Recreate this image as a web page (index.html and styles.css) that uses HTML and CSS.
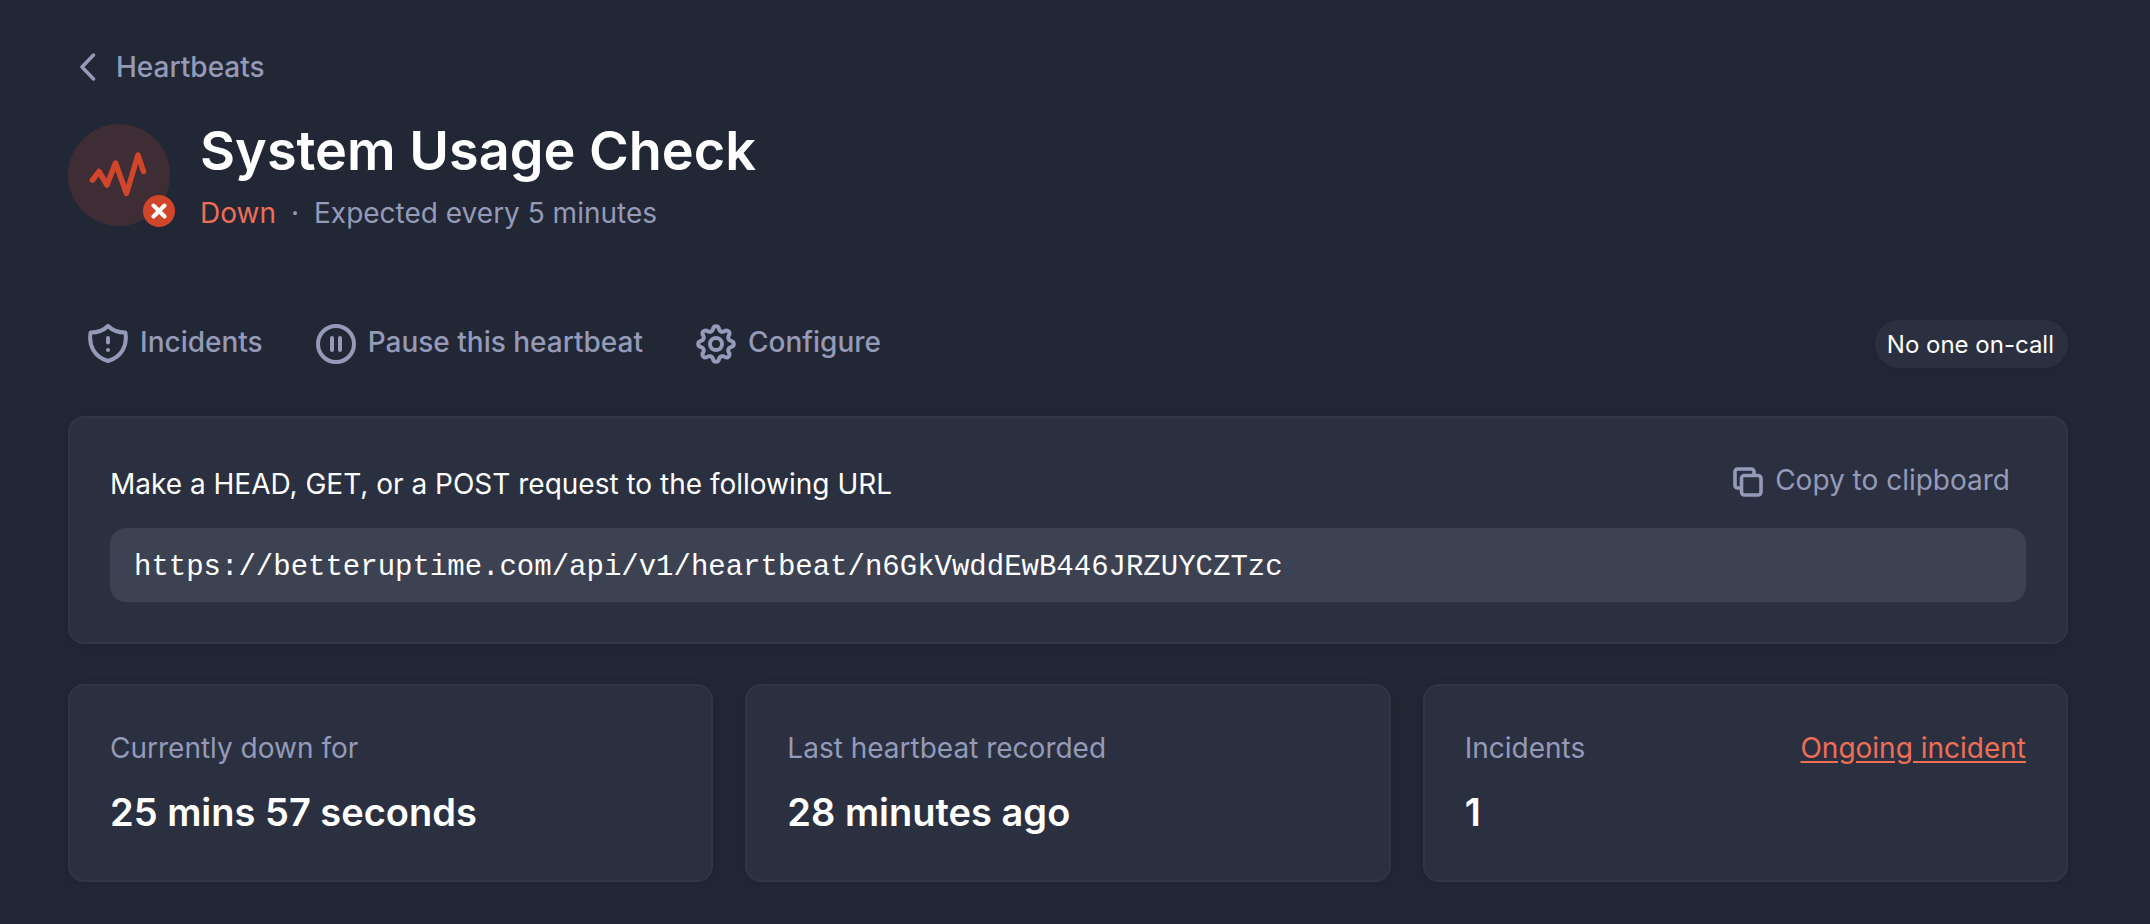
FILE: index.html
```html
<!DOCTYPE html>
<html lang="en">
<head>
    <meta charset="UTF-8">
    <meta name="viewport" content="width=device-width, initial-scale=1.0">
    <title>System Usage Check</title>
    <link rel="stylesheet" href="styles.css">
</head>
<body>
    <main class="page">
        <a class="back-link" href="#">
            <svg width="16" height="28" viewBox="0 0 16 28" fill="none" stroke="currentColor" stroke-width="3.500" stroke-linecap="round" stroke-linejoin="round"><path d="M13.500 2L2 14l11.500 12"/></svg>
            Heartbeats
        </a>

        <header class="monitor">
            <div class="avatar">
                <svg width="102" height="102" viewBox="0 0 102 102" fill="none" stroke="currentColor" stroke-width="5.500" stroke-linecap="round" stroke-linejoin="round"><path d="M24.500 56L31 47.500L39 61L47.500 39L58.500 69.500L70 31L75.500 47.500"/></svg>
                <span class="badge">
                    <svg width="16" height="16" viewBox="0 0 16 16" stroke="currentColor" stroke-width="4" stroke-linecap="round"><path d="M2.500 2.500l11 11M13.500 2.500l-11 11"/></svg>
                </span>
            </div>
            <div class="monitor-info">
                <h1>System Usage Check</h1>
                <p><span class="status-down">Down</span><span class="dot">·</span>Expected every 5 minutes</p>
            </div>
        </header>

        <div class="toolbar">
            <div class="actions">
                <a class="action" href="#">
                    <svg width="40" height="40" viewBox="0 0 40 40" fill="none" stroke="currentColor" stroke-width="4" stroke-linecap="round" stroke-linejoin="round"><path d="M20 2C16 6 9 8.500 2.600 8.500C0.500 21 6 33 20 37C34 33 39.500 21 37.400 8.500C31 8.500 24 6 20 2Z"/><path d="M20 14v4.500M20 26v.1"/></svg>
                    <span>Incidents</span>
                </a>
                <button class="action" type="button">
                    <svg width="40" height="40" viewBox="0 0 40 40" fill="none" stroke="currentColor" stroke-width="4" stroke-linecap="round"><circle cx="20" cy="20" r="18"/><path d="M16 14v12M24 14v12"/></svg>
                    <span>Pause this heartbeat</span>
                </button>
                <a class="action" href="#">
                    <svg width="40" height="40" viewBox="0 0 24 24" fill="none" stroke="currentColor" stroke-width="2.400" stroke-linejoin="round"><path d="M9.990 3.480C10.600 .550 13.400 .550 14.010 3.480A2.070 2.070 0 0 0 16.600 4.550C19.100 2.910 21.090 4.900 19.450 7.400A2.070 2.070 0 0 0 20.520 9.990C23.450 10.600 23.450 13.400 20.520 14.010A2.070 2.070 0 0 0 19.450 16.600C21.090 19.100 19.100 21.090 16.600 19.450A2.070 2.070 0 0 0 14.010 20.520C13.400 23.450 10.600 23.450 9.990 20.520A2.070 2.070 0 0 0 7.400 19.450C4.900 21.090 2.910 19.100 4.550 16.600A2.070 2.070 0 0 0 3.480 14.010C.550 13.400 .550 10.600 3.480 9.990A2.070 2.070 0 0 0 4.550 7.400C2.910 4.900 4.900 2.910 7.400 4.550A2.070 2.070 0 0 0 9.990 3.480Z"/><circle cx="12" cy="12" r="3.600"/></svg>
                    <span>Configure</span>
                </a>
            </div>
            <span class="on-call">No one on-call</span>
        </div>

        <section class="card">
            <div class="url-head">
                <label for="heartbeatUrl">Make a HEAD, GET, or a POST request to the following URL</label>
                <button class="action copy" id="copyBtn" type="button">
                    <svg width="30" height="30" viewBox="0 0 30 30" fill="none" stroke="currentColor" stroke-width="3.600" stroke-linejoin="round"><rect x="8.500" y="8.500" width="19.500" height="19.500" rx="3"/><path d="M7 21H4.500A2.500 2.500 0 0 1 2 18.500V4.500A2.500 2.500 0 0 1 4.500 2H18.500A2.500 2.500 0 0 1 21 4.500V7"/></svg>
                    <span>Copy to clipboard</span>
                </button>
            </div>
            <input class="url" id="heartbeatUrl" type="text" value="https://betteruptime.com/api/v1/heartbeat/n6GkVwddEwB446JRZUYCZTzc" readonly>
        </section>

        <section class="stats">
            <div class="card">
                <div class="stat-label">Currently down for</div>
                <div class="stat-value">25 mins 57 seconds</div>
            </div>
            <div class="card">
                <div class="stat-label">Last heartbeat recorded</div>
                <div class="stat-value">28 minutes ago</div>
            </div>
            <div class="card">
                <div class="stat-label">Incidents <a href="#">Ongoing incident</a></div>
                <div class="stat-value">1</div>
            </div>
        </section>
    </main>

    <script>
        document.getElementById('copyBtn').addEventListener('click', () => {
            const url = document.getElementById('heartbeatUrl');
            url.select();
            navigator.clipboard.writeText(url.value);
        });
    </script>
</body>
</html>
```
FILE: styles.css
```css
* { box-sizing: border-box; }

body {
    margin: 0;
    background: #222735;
    color: #fff;
    font-family: Inter, "Liberation Sans", sans-serif;
    font-size: 28px;
    line-height: 40px;
}

h1, p { margin: 0; }
svg { display: block; flex: none; }

.page { padding: 47px 82px 40px 68px; }

/* header */
.back-link {
    display: flex;
    align-items: center;
    gap: 20px;
    width: max-content;
    padding-left: 12px;
    color: #949ab8;
    font-weight: 500;
    text-decoration: none;
}

.monitor {
    display: flex;
    align-items: center;
    gap: 30px;
    margin-top: 30px;
}
.avatar {
    position: relative;
    width: 102px;
    height: 102px;
    border-radius: 50%;
    background: #3f2d36;
    color: #d1452a;
}
.badge {
    position: absolute;
    right: -5px;
    bottom: -1px;
    display: flex;
    align-items: center;
    justify-content: center;
    width: 32px;
    height: 32px;
    border-radius: 50%;
    background: #d1452a;
    color: #fff;
}
.monitor-info p { margin-top: 8px; color: #949ab8; }
h1 { font-size: 54px; line-height: 68px; font-weight: 600; }
.status-down { color: #ee6e56; }
.dot { margin: 0 15px; }

/* action row */
.toolbar {
    display: flex;
    align-items: center;
    justify-content: space-between;
    margin-top: 87px;
}
.actions { display: flex; gap: 53px; padding-left: 20px; }
.action {
    display: flex;
    align-items: center;
    gap: 12px;
    height: 48px;
    padding: 0;
    border: none;
    background: none;
    color: #949ab8;
    font: inherit;
    font-weight: 500;
    text-decoration: none;
    cursor: pointer;
}
.action span { padding-bottom: 4px; }
.on-call {
    padding: 2px 14px 0 12px;
    border-radius: 24px;
    background: #2b3040;
    box-shadow: 0 2px 6px rgba(30, 30, 48, 0.5);
    font-size: 24px;
    line-height: 46px;
}

/* cards */
.card {
    padding: 40px;
    border: 2px solid #313647;
    border-radius: 16px;
    background: #2b3040;
    box-shadow: 0 2px 8px rgba(30, 30, 48, 0.5);
}
.toolbar + .card { margin-top: 48px; }

.url-head {
    display: flex;
    justify-content: space-between;
    height: 52px;
    margin-bottom: 18px;
}
.url-head label { line-height: 52px; }
.copy { padding-right: 16px; font-weight: 400; }
.url {
    display: block;
    width: 100%;
    height: 74px;
    padding: 4px 24px 0;
    border: none;
    border-radius: 16px;
    outline: none;
    background: #3d4252;
    color: #fff;
    font-family: "Liberation Mono", monospace;
    font-size: 29px;
}

.stats {
    display: grid;
    grid-template-columns: repeat(3, 1fr);
    gap: 32px;
    margin-top: 40px;
}
.stat-label {
    display: flex;
    justify-content: space-between;
    color: #949ab8;
    line-height: 44px;
}
.stat-label a { color: #ee6e56; text-underline-offset: 3px; }
.stat-value {
    margin-top: 14px;
    font-size: 38px;
    line-height: 56px;
    font-weight: 600;
}
```
